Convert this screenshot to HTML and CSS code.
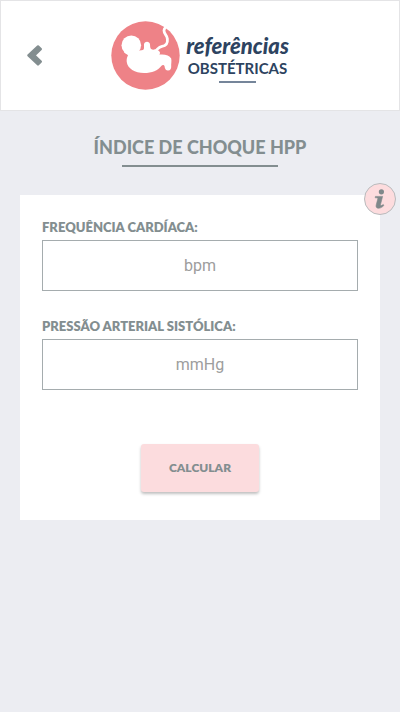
FILE: index.html
```html
<!DOCTYPE html>
<html lang="pt-BR">
<head>
  <meta charset="UTF-8">
  <meta name="viewport" content="width=device-width, initial-scale=1.0">
  <title>Índice de Choque HPP</title>
  <link rel="stylesheet" href="styles.css">
</head>
<body>
  <header class="topbar">
    <a class="back" href="#" aria-label="Voltar">
      <svg width="17" height="23" viewBox="0 0 17 23">
        <path d="M2.4 11.3 L12 2.4 L14.8 5.2 L8.3 11.3 L14.8 17.6 L12 20.4 Z" fill="#838e90" stroke="#838e90" stroke-width="2.4" stroke-linejoin="round"/>
      </svg>
    </a>
    <div class="logo">
      <svg class="logo-mark" width="69" height="69" viewBox="0 0 69 69">
        <circle cx="34.5" cy="34.5" r="34.2" fill="#ee8287"/>
        <circle cx="20.3" cy="24.3" r="9.8" fill="#fff"/>
        <path fill="#fff" d="M13 31 C15 33.5 17 33.5 17 34.5 C16 36 15.5 38 15.7 40.7 C16.5 47.5 24 52 33 52 C41 52 47 49.5 50.3 45 C51 44 53 43.5 53.5 45 C53.8 48 55 49.5 57 49.5 C59.5 49.5 60.3 47.5 60.2 45.5 C60 43 60.8 40 60.2 37.5 C58.5 34.3 53.5 32.8 48.3 33.6 C50.5 31.5 47.5 28.8 43.5 28.6 C41 29 39.4 28 39.2 26 L39 23.5 C38.8 19.7 33.2 19.7 33 23.5 L33 27 C33 28.8 31.5 29.5 28.5 29.5 L27 30 Z"/>
        <path d="M44 30 C47 28.5 47 26 51 25.3 C55.5 24.8 56.8 22 56.4 18 C56 13.5 53 13.5 53 9.5 C53 7.5 54 6.5 56 5" fill="none" stroke="#fff" stroke-width="2.8"/>
      </svg>
      <div class="logo-text">
        <span class="logo-script">referências</span>
        <span class="logo-caps">OBSTÉTRICAS</span>
        <span class="logo-line"></span>
      </div>
    </div>
  </header>

  <main>
    <h1>ÍNDICE DE CHOQUE HPP</h1>
    <form class="card">
      <button type="button" class="info" aria-label="Informações">
        <svg width="12" height="20" viewBox="0 0 12 20">
          <circle cx="7.4" cy="2.8" r="2.6" fill="#7f888a"/>
          <path d="M1.4 7.4 H8.6 L6.5 15.6 C6.3 16.8 7.3 16.8 9.3 15.5 L9.8 16.6 C7.6 18.8 5.6 19.4 3.9 19.2 C2.3 19 1.8 17.7 2.2 16 L3.8 9.8 C3.9 9 3.4 8.9 1.2 8.8 Z" fill="#7f888a" stroke="#7f888a" stroke-width="0.6"/>
        </svg>
      </button>
      <div class="field">
        <label for="frequencia">FREQUÊNCIA CARDÍACA:</label>
        <input type="text" id="frequencia" inputmode="numeric" placeholder="bpm">
      </div>
      <div class="field">
        <label for="pressao">PRESSÃO ARTERIAL SISTÓLICA:</label>
        <input type="text" id="pressao" inputmode="numeric" placeholder="mmHg">
      </div>
      <button type="button" class="calcular">CALCULAR</button>
    </form>
  </main>
</body>
</html>
```
FILE: styles.css
```css
* {
  box-sizing: border-box;
}

body {
  margin: 0;
  background-color: #ecedf2;
  color: #838e90;
  font-family: Lato, "Liberation Sans", sans-serif;
}

.topbar {
  display: grid;
  grid-template-columns: 1fr auto 1fr;
  align-items: center;
  padding: 20px 25px;
  background-color: #fff;
  border: 1px solid #e4e4e6;
}

.back {
  display: flex;
}

.logo {
  display: flex;
  align-items: center;
  gap: 6px;
}

.logo-mark {
  display: block;
}

.logo-text {
  display: flex;
  flex-direction: column;
  align-items: center;
  padding-top: 4px;
  color: #2d4360;
}

.logo-script {
  font-size: 22px;
  font-style: italic;
  font-weight: 900;
  line-height: 27px;
}

.logo-caps {
  font-size: 15px;
  font-weight: 700;
  line-height: 18px;
}

.logo-line {
  width: 37px;
  height: 2px;
  margin-top: 4px;
  background-color: #75859a;
}

h1 {
  display: flex;
  flex-direction: column;
  align-items: center;
  gap: 6px;
  margin: 24px 0 28px;
  font-size: 18px;
  font-weight: 900;
  line-height: 24px;
}

h1::after {
  content: "";
  width: 156px;
  height: 2px;
  background-color: #838e90;
}

.card {
  position: relative;
  display: flex;
  flex-direction: column;
  gap: 25px;
  margin: 0 20px;
  padding: 22px 22px 28px;
  background-color: #fff;
}

.info {
  position: absolute;
  top: -12px;
  right: -16px;
  display: flex;
  align-items: center;
  justify-content: center;
  width: 32px;
  height: 32px;
  padding: 0;
  background-color: #fddcde;
  border: 1px solid #b9bbbd;
  border-radius: 50%;
}

.field {
  display: flex;
  flex-direction: column;
  gap: 3px;
}

.field label {
  font-size: 13px;
  font-weight: 800;
  line-height: 20px;
}

.field input {
  width: 100%;
  height: 51px;
  padding: 0 15px;
  background-color: #fff;
  border: 1px solid #a5acae;
  border-radius: 0;
  color: #838e90;
  font-family: Roboto, sans-serif;
  font-size: 16px;
  text-align: center;
}

.field input::placeholder {
  color: #9d9d9d;
}

.calcular {
  align-self: center;
  margin-top: 29px;
  padding: 14px 28px;
  background-color: #fcdcde;
  border: none;
  border-radius: 3px;
  box-shadow: 0 2px 3px rgba(0, 0, 0, 0.25);
  color: #838e90;
  font-family: inherit;
  font-size: 12px;
  font-weight: 800;
  line-height: 20px;
}
```
